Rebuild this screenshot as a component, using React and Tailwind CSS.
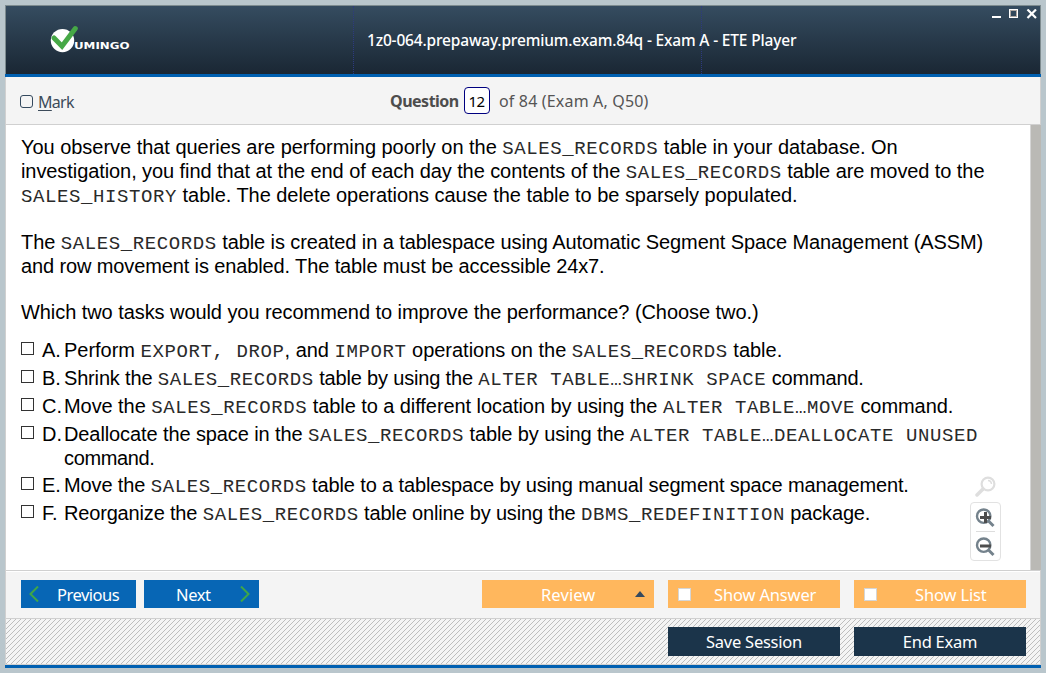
import React from "react";

const Code = ({ children }) => (
  <span className="font-['Liberation_Mono',monospace] text-[19px] leading-none tracking-[0.6px] text-[#2a2a2a]">{children}</span>
);

const Line = ({ track = "tracking-[-0.04px]", children }) => <div className={`h-6 whitespace-pre leading-6 ${track}`}>{children}</div>;

const Option = ({ letter, children, gap = "mb-1" }) => (
  <div className={`flex ${gap}`}>
    <span className="mt-[4px] mr-2 h-[13px] w-[13px] shrink-0 border border-[#333] bg-white" />
    <span className="w-[22px] shrink-0 whitespace-nowrap leading-6">{letter}.</span>
    <div>{children}</div>
  </div>
);

const Magnifier = ({ sign }) => (
  <svg width="20" height="20" viewBox="0 0 20 20" fill="none">
    <circle cx="8.7" cy="8.2" r="6.7" stroke="#74828c" strokeWidth="2.4" />
    <path d="M13.500 13l5 5" stroke="#74828c" strokeWidth="3" />
    <path d={sign === "+" ? "M5 9.500H16M10.500 4v11" : "M5 9H16"} stroke="#4d4d4d" strokeWidth="3" />
  </svg>
);

const Hatch = () => (
  <svg className="absolute inset-0 h-full w-full" shapeRendering="crispEdges">
    <defs>
      <pattern id="hatch" width="5" height="5" patternUnits="userSpaceOnUse">
        <path d="M4 0h1v1h-1zM3 1h1v1h-1zM2 2h1v1h-1zM1 3h1v1h-1zM0 4h1v1h-1z" fill="#bdbdbd" />
      </pattern>
    </defs>
    <rect width="100%" height="100%" fill="url(#hatch)" />
  </svg>
);

export default function App() {
  return (
    <div className="h-[673px] w-[1046px] overflow-hidden bg-[#b9c6cc] px-[5px] pt-[5px] font-['Noto_Sans',sans-serif]">
      <div className="flex h-[663px] w-[1036px] flex-col">
        <header className="flex h-[69px] border border-b-0 border-[#7d8b8f] bg-linear-to-b from-[#354c60] to-[#1a2734]">
          <div className="flex w-[348px] border-r border-dotted border-[#2d3a80] pt-[19px] pl-[44px]">
            <svg width="84" height="30" viewBox="0 0 84 30">
              <circle cx="12.5" cy="15.6" r="11.7" fill="#fff" />
              <path d="M4 13l8 8.2L25.3 3.6" fill="none" stroke="#46a846" strokeWidth="5" strokeLinecap="round" />
              <text x="24" y="24" fill="#fff" fontFamily="DejaVu Sans" fontWeight="bold" fontSize="9.5" textLength="55.5" lengthAdjust="spacingAndGlyphs">UMINGO</text>
            </svg>
          </div>
          <h1 className="w-[348px] whitespace-nowrap border-r border-dotted border-[#2d3a80] pt-[22px] pl-[13px] text-[15.5px] leading-6 font-medium tracking-[-0.17px] text-white">1z0-064.prepaway.premium.exam.84q - Exam A - ETE Player</h1>
          <div className="flex flex-1 justify-end pt-[3px] pr-[2px]">
            <svg width="46" height="10" viewBox="0 0 46 10" fill="none" stroke="#fff">
              <path d="M0 8h9" strokeWidth="2" />
              <rect x="17.5" y=".5" width="8" height="8" strokeWidth="1" />
              <rect x="18.5" y="1.5" width="6" height="6" strokeWidth="1" stroke="#b0a8a2" />
              <path d="M35.5.5l8.500 8.500M44 .5l-8.500 8.500" strokeWidth="2.2" />
            </svg>
          </div>
        </header>
        <div className="h-[3px] bg-[#0060b1]" />
        <div className="flex h-[48px] border border-t-0 border-[#d0d0d0] bg-[#f4f4f4] text-[16px] text-[#555]">
          <label className="flex w-[384px] gap-[5px] pt-[13px] pl-[14px] text-[#3c4b5a]">
            <span className="mt-[5px] h-[13px] w-[13px] rounded-[3px] border border-[#34495e]" />
            <span className="leading-6 tracking-[-0.7px]"><u className="underline-offset-2">M</u>ark</span>
          </label>
          <span className="w-[74px] pt-[12px] font-bold leading-6 tracking-[-0.5px] text-[#4d4d4d]">Question</span>
          <span className="mt-[10px] h-[27px] w-[26px] rounded border border-[#000080] bg-white pr-px text-center text-[15px] leading-[27px] tracking-[-0.5px] text-black">12</span>
          <span className="pt-[12px] pl-[9px] leading-6 tracking-[0.17px]">of 84 (Exam A, Q50)</span>
        </div>
        <div className="flex h-[445px] bg-white">
          <main className="relative flex-1 border-l border-[#d0d0d0] pt-[10px] pl-[15px] font-['Liberation_Sans',Arial,sans-serif] text-[20px] text-black">
            <Line track="tracking-[-0.03px]">You observe that queries are performing poorly on the <Code>SALES_RECORDS</Code> table in your database. On</Line>
            <Line track="tracking-[-0.08px]">investigation, you find that at the end of each day the contents of the <Code>SALES_RECORDS</Code> table are moved to the</Line>
            <Line track="tracking-[-0.04px]"><Code>SALES_HISTORY</Code> table. The delete operations cause the table to be sparsely populated.</Line>
            <div className="mt-[23px]" />
            <Line track="tracking-[-0.09px]">The <Code>SALES_RECORDS</Code> table is created in a tablespace using Automatic Segment Space Management (ASSM)</Line>
            <Line track="tracking-[-0.12px]">and row movement is enabled. The table must be accessible 24x7.</Line>
            <div className="mt-[22px]" />
            <Line track="tracking-[-0.065px]">Which two tasks would you recommend to improve the performance? (Choose two.)</Line>
            <div className="mt-[14px]">
              <Option letter="A"><Line track="tracking-[-0.02px]">Perform <Code>EXPORT, DROP</Code>, and <Code>IMPORT</Code> operations on the <Code>SALES_RECORDS</Code> table.</Line></Option>
              <Option letter="B"><Line track="tracking-[-0.17px]">Shrink the <Code>SALES_RECORDS</Code> table by using the <Code>ALTER TABLE…SHRINK SPACE</Code> command.</Line></Option>
              <Option letter="C"><Line track="tracking-[-0.07px]">Move the <Code>SALES_RECORDS</Code> table to a different location by using the <Code>ALTER TABLE…MOVE</Code> command.</Line></Option>
              <Option letter="D" gap="mb-[3px]">
                <Line track="tracking-[-0.1px]">Deallocate the space in the <Code>SALES_RECORDS</Code> table by using the <Code>ALTER TABLE…DEALLOCATE UNUSED</Code></Line>
                <Line track="tracking-[-0.35px]">command.</Line>
              </Option>
              <Option letter="E"><Line track="tracking-[-0.13px]">Move the <Code>SALES_RECORDS</Code> table to a tablespace by using manual segment space management.</Line></Option>
              <Option letter="F"><Line track="tracking-[-0.17px]">Reorganize the <Code>SALES_RECORDS</Code> table online by using the <Code>DBMS_REDEFINITION</Code> package.</Line></Option>
            </div>
            <div className="absolute top-[351px] left-[963px] flex w-[32px] flex-col items-center">
              <svg width="21" height="21" viewBox="0 0 21 21" fill="none" stroke="#dedede">
                <circle cx="13" cy="8" r="6.4" strokeWidth="2.2" />
                <path d="M2 19l6-6" strokeWidth="3.500" strokeLinecap="round" />
                <path d="M13 4.500q3 0 3.500 3.500" strokeWidth="1.500" />
              </svg>
              <div className="mt-[5px] flex h-[59px] w-[31px] flex-col items-center rounded border border-[#e2e2e2] bg-white pt-[5px]">
                <Magnifier sign="+" />
                <span className="mt-[3px] mb-[5px] h-px w-[19px] shrink-0 bg-[#ddd]" />
                <Magnifier sign="-" />
              </div>
            </div>
          </main>
          <div className="w-[11px] border-l border-[#d5d5d5] bg-[#bab9b5]" />
        </div>
        <div className="flex h-[49px] border-x border-y border-[#d0d0d0] bg-[#f4f4f4] pt-[9px] pl-[15px] text-[16.5px] leading-[29px] tracking-[-0.15px] text-white shadow-[inset_0_1px_0_#fff]">
          <button className="mr-2 flex h-7 w-[115px] items-center bg-[#0766b5] pl-2">
            <svg width="10" height="16" viewBox="0 0 10 16" fill="none" stroke="#3fa648" strokeWidth="2"><path d="M9 .5L1.500 8 9 15.500" /></svg>
            <span className="pl-[18px] tracking-[-0.5px]">Previous</span>
          </button>
          <button className="flex h-7 w-[115px] items-center bg-[#0766b5] pl-8">
            <span className="w-[64px] text-left tracking-[-0.4px]">Next</span>
            <svg width="10" height="16" viewBox="0 0 10 16" fill="none" stroke="#3fa648" strokeWidth="2"><path d="M1 .5L8.500 8 1 15.500" /></svg>
          </button>
          <button className="mr-[14px] ml-[223px] flex h-7 w-[172px] items-center bg-[#ffb75d]">
            <span className="w-[153px] pl-[59px] text-left tracking-[0.1px]">Review</span>
            <svg width="10" height="6"><path d="M0 6L5 0l5 6z" fill="#34495e" /></svg>
          </button>
          <button className="mr-[14px] flex h-7 w-[172px] items-center bg-[#ffb75d] pl-[10px]">
            <span className="mt-px h-[13px] w-[13px] border border-[#d5d5d5] bg-white" />
            <span className="pl-[23px] whitespace-nowrap tracking-[-0.15px]">Show Answer</span>
          </button>
          <button className="flex h-7 w-[172px] items-center bg-[#ffb75d] pl-[10px]">
            <span className="mt-px h-[13px] w-[13px] border border-[#d5d5d5] bg-white" />
            <span className="pl-[38px] whitespace-nowrap">Show List</span>
          </button>
        </div>
        <div className="relative flex h-[46px] justify-end gap-[14px] border-x border-b border-[#d0d0d0] bg-[#f4f4f4] pt-[8px] pr-[14px] text-[16.5px] leading-[29px] tracking-[-0.25px] text-white">
          <Hatch />
          <button className="relative h-[29px] w-[172px] bg-[#1b344a]">Save Session</button>
          <button className="relative h-[29px] w-[172px] bg-[#1b344a]">End Exam</button>
        </div>
        <div className="h-[3px] shrink-0 bg-[#0060b1]" />
      </div>
    </div>
  );
}
